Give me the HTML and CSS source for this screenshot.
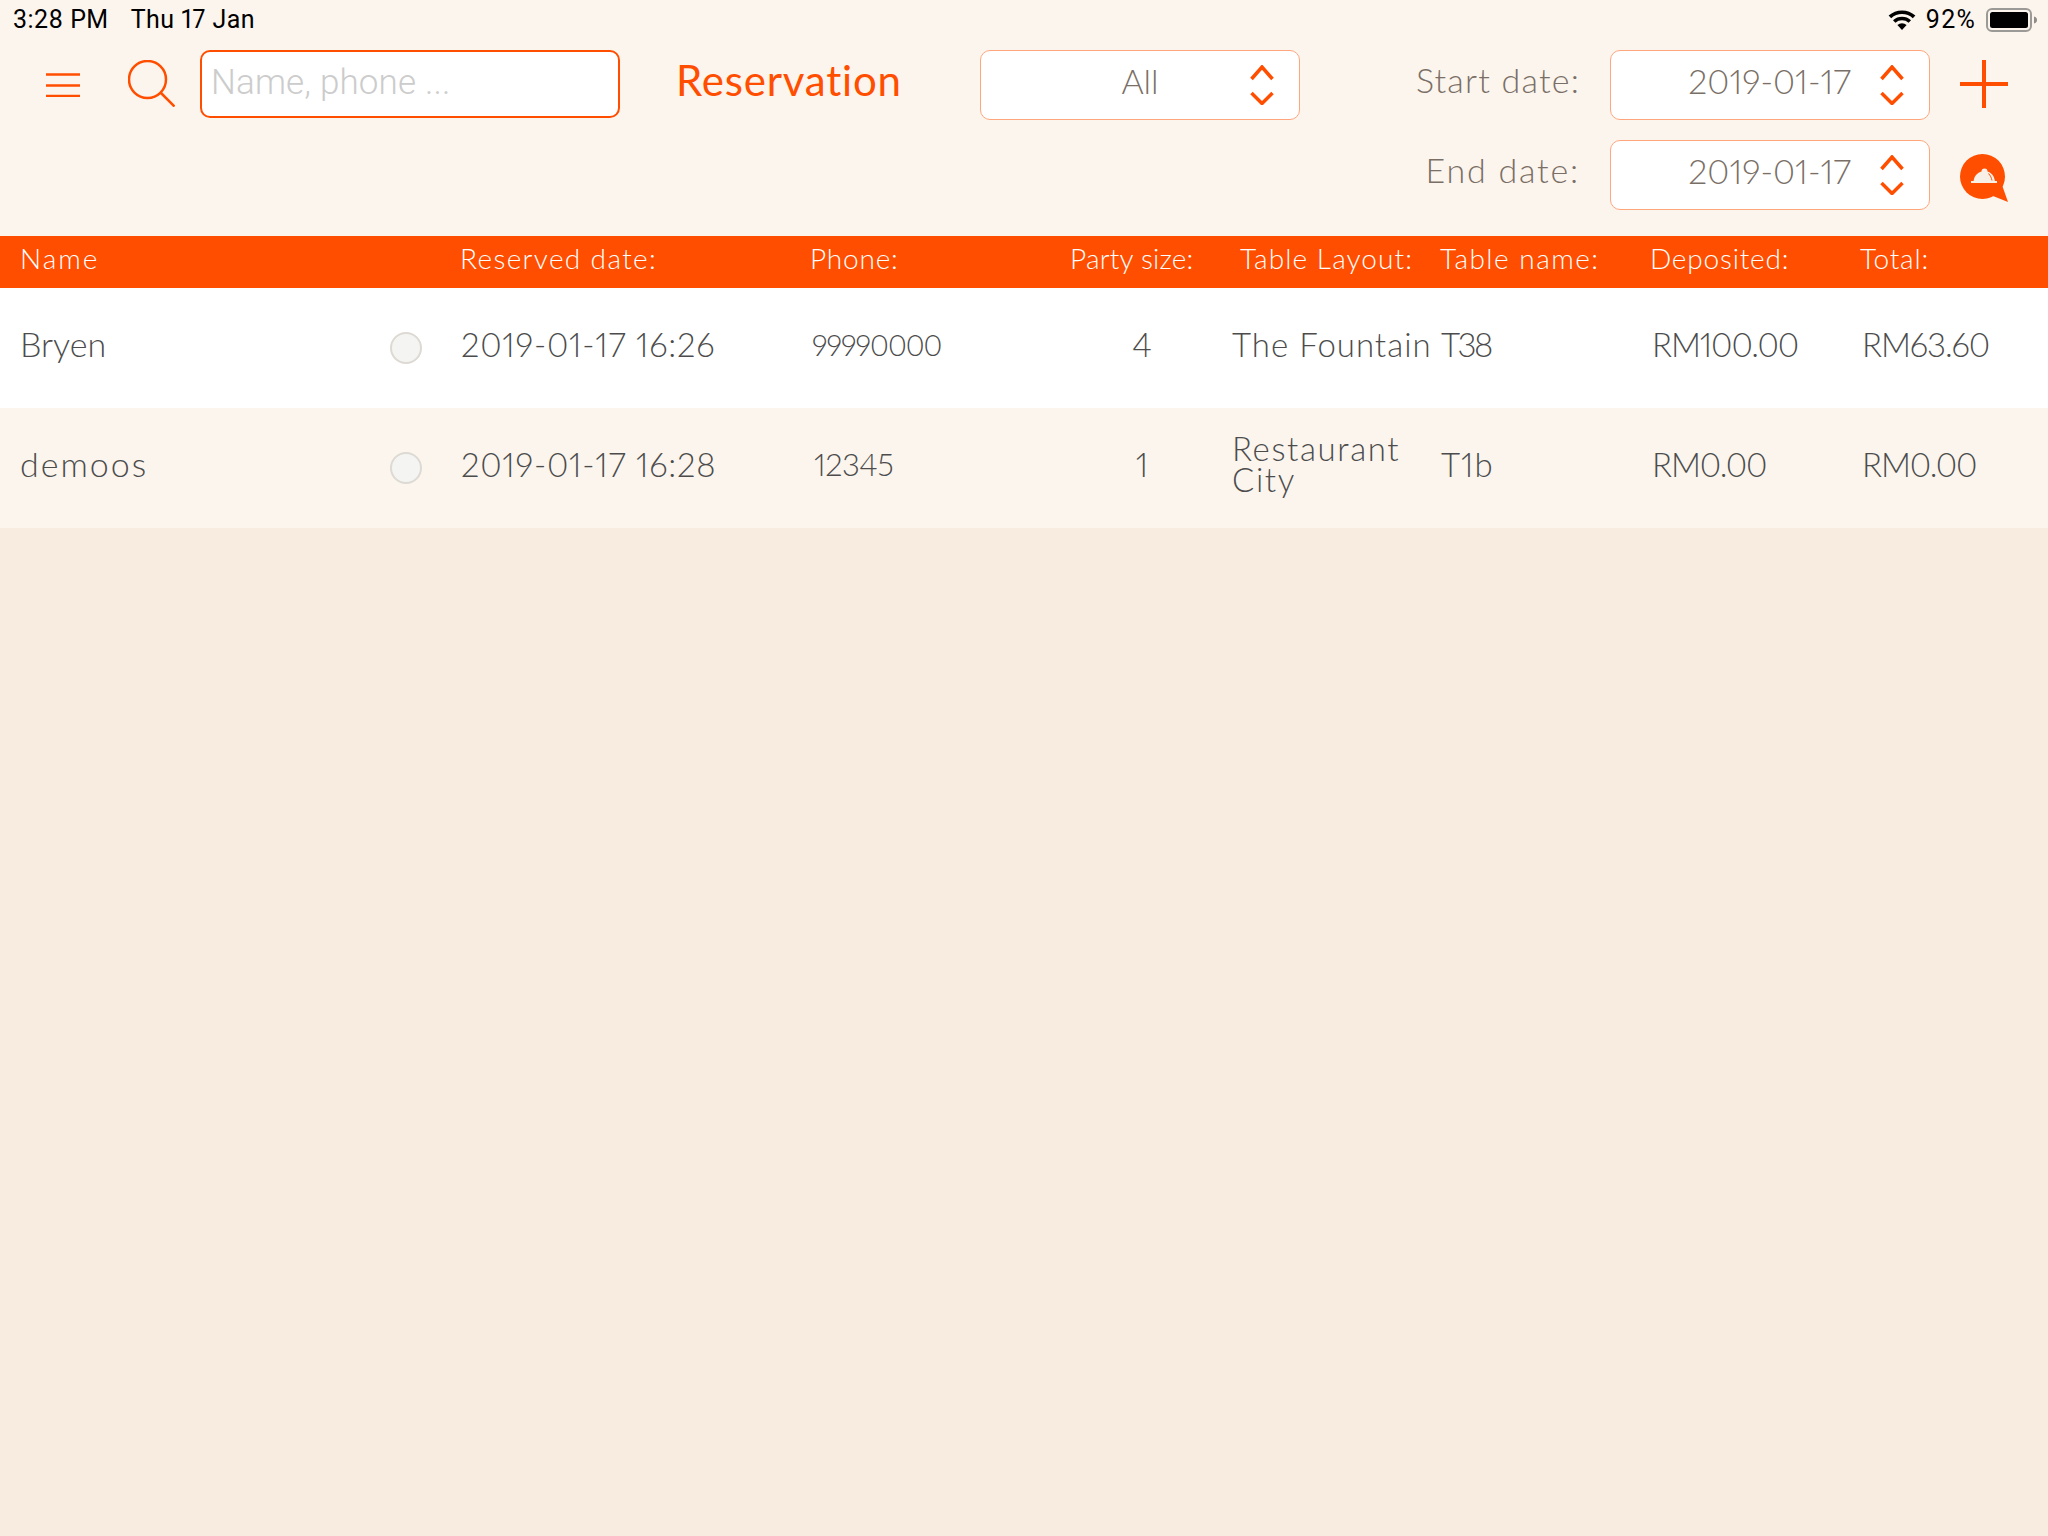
FILE: index.html
```html
<!DOCTYPE html>
<html lang="en">
<head>
<meta charset="utf-8">
<title>Reservation</title>
<link rel="stylesheet" href="styles.css">
</head>
<body>
<div class="top">
  <div class="status">
    <div class="status-left"><span>3:28 PM</span><span>Thu 17 Jan</span></div>
    <div class="status-right">
      <svg class="wifi" viewBox="0 0 28 20"><path d="M14 20l-4.600-5a7 7 0 0 1 9.200 0z"/><path d="M7.400 12.800l-2.400-2.600a13.500 13.500 0 0 1 18 0l-2.400 2.600a10 10 0 0 0-13.200 0z"/><path d="M3.200 8.300L.6 5.600a20 20 0 0 1 26.800 0l-2.600 2.700a16 16 0 0 0-21.600 0z"/></svg>
      <span class="pct">92%</span>
      <svg class="battery" viewBox="0 0 52 24"><rect x="1" y="1" width="44" height="22" rx="5" fill="none" stroke="#9c9a96" stroke-width="2"/><rect x="4" y="4" width="38" height="16" rx="2.500" fill="#000"/><path d="M48 8.500c2 .4 3 1.700 3 3.500s-1 3.100-3 3.500z" fill="#8f8d89"/></svg>
    </div>
  </div>
  <div class="toolbar">
    <div class="tool-left">
      <svg class="menu" viewBox="0 0 34 24"><path d="M0 1.500h34M0 12.500h34M0 23h34"/></svg>
      <svg class="search" viewBox="0 0 47 47"><circle cx="19.500" cy="19.500" r="18.500"/><path d="M33 33l13.500 13.500"/></svg>
      <div class="search-box">Name, phone ...</div>
      <div class="title">Reservation</div>
      <div class="box box-all"><span>All</span><svg class="updown" viewBox="0 0 24 40"><path d="M1.500 14L12 2l10.500 12M1.500 28L12 38.500 22.500 28"/></svg></div>
    </div>
    <div class="dates">
      <div class="date-row">
        <span class="date-label">Start date:</span>
        <div class="box box-date"><span>2019-01-17</span><svg class="updown" viewBox="0 0 24 40"><path d="M1.500 14L12 2l10.500 12M1.500 28L12 38.500 22.500 28"/></svg></div>
        <svg class="plus" viewBox="0 0 48 48"><path d="M24 0v48M0 24h48"/></svg>
      </div>
      <div class="date-row">
        <span class="date-label label-end">End date:</span>
        <div class="box box-date"><span>2019-01-17</span><svg class="updown" viewBox="0 0 24 40"><path d="M1.500 14L12 2l10.500 12M1.500 28L12 38.500 22.500 28"/></svg></div>
        <svg class="bubble" viewBox="0 0 48 48"><circle cx="22.500" cy="22.500" r="22.500" fill="#ff4e00"/><path d="M42 31l6 17-15-6z" fill="#ff4e00"/><path d="M11 27h2.600c.6-5 3.900-8.500 7.900-9.500a3 3 0 0 1 6 0c3.800 1 6.800 4.500 7.400 9.500H37v2H11z" fill="#f8f0e6"/><path d="M28.500 19.500c1.800 2 3 4.300 3.500 7" fill="none" stroke="#ff4e00" stroke-width="1"/></svg>
      </div>
    </div>
  </div>
</div>
<div class="table">
  <div class="row head">
    <span class="c-name">Name</span><span class="c-mark"></span><span class="c-date">Reserved date:</span><span class="c-phone">Phone:</span><span class="c-party">Party size:</span><span class="c-layout">Table Layout:</span><span class="c-table">Table name:</span><span class="c-dep">Deposited:</span><span class="c-total">Total:</span>
  </div>
  <div class="row body odd">
    <span class="c-name">Bryen</span><span class="c-mark"><i class="dot"></i></span><span class="c-date">2019-01-17 16:26</span><span class="c-phone">99990000</span><span class="c-party">4</span><span class="c-layout">The Fountain</span><span class="c-table table-tight">T38</span><span class="c-dep">RM100.00</span><span class="c-total">RM63.60</span>
  </div>
  <div class="row body even">
    <span class="c-name name-wide">demoos</span><span class="c-mark"><i class="dot"></i></span><span class="c-date">2019-01-17 16:28</span><span class="c-phone phone-short">12345</span><span class="c-party">1</span><span class="c-layout layout-wide">Restaurant City</span><span class="c-table table-loose">T1b</span><span class="c-dep">RM0.00</span><span class="c-total">RM0.00</span>
  </div>
</div>
</body>
</html>
```
FILE: styles.css
```css
* { box-sizing: border-box; }
html, body { margin: 0; height: 100%; }
body { background: #f8ebdf; font-family: "Lato", "Liberation Sans", sans-serif; font-weight: 300; font-variant-ligatures: none; font-variant-numeric: proportional-nums; min-height: 1536px; color: #4c4c4c; }
.top { background: #fcf5ee; height: 236px; display: flex; flex-direction: column; }
.status { height: 40px; padding: 6px 10px 0 13px; display: flex; justify-content: space-between; font-family: "Roboto", sans-serif; font-weight: 400; font-size: 25px; line-height: 28px; color: #000; }
.status-left { display: flex; gap: 22px; letter-spacing: .45px; }
.status-right { display: flex; gap: 10px; align-items: flex-start; }
.pct { letter-spacing: 1.200px; }
.wifi { width: 28px; height: 20px; margin-top: 4px; fill: #000; }
.battery { width: 52px; height: 24px; margin-top: 2px; }
.toolbar { display: flex; justify-content: space-between; padding: 10px 40px 0 46px; }
.tool-left { display: flex; align-items: flex-start; }
.menu { width: 34px; height: 24px; margin-top: 23px; fill: none; stroke: #ff4e00; stroke-width: 2.500; }
.search { width: 47px; height: 47px; margin: 10px 0 0 48px; fill: none; stroke: #ff4e00; stroke-width: 2.500; }
.search-box { width: 420px; height: 68px; margin-left: 25px; background: #fff; border: 2px solid #ff4e00; border-radius: 10px; padding-left: 9px; font-family: "Roboto", sans-serif; font-size: 35px; letter-spacing: .15px; line-height: 62px; color: #ccc; }
.title { width: 304px; margin-left: 56px; color: #ff4e00; font-size: 42px; letter-spacing: .8px; line-height: 60px; font-weight: 400; }
.box { background: #fff; border: 1px solid #ffa67f; border-radius: 10px; height: 70px; display: flex; align-items: center; color: #7a6f66; font-size: 34px; position: relative; }
.box > span { margin-bottom: 10px; }
.box-all { width: 320px; justify-content: center; }
.box-date { width: 320px; justify-content: flex-end; padding-right: 78px; }
.updown { width: 24px; height: 40px; fill: none; stroke: #ff4e00; stroke-width: 3.500; position: absolute; right: 25px; top: 14px; }
.dates { display: flex; flex-direction: column; gap: 20px; }
.date-row { display: flex; align-items: flex-start; justify-content: flex-end; }
.date-label { color: #7a6f66; font-size: 34px; letter-spacing: 1.200px; line-height: 60px; margin-right: 30px; }
.label-end { letter-spacing: 1.800px; }
.plus { width: 48px; height: 48px; margin: 10px 0 0 30px; fill: none; stroke: #ff4e00; stroke-width: 4; }
.bubble { width: 48px; height: 48px; margin: 14px 0 0 30px; }
.table { display: flex; flex-direction: column; }
.row { display: grid; grid-template-columns: 369px 92px 349px 260px 162px 209px 211px 211px 1fr; align-items: center; }
.row > span:first-child { padding-left: 20px; }
.head { height: 52px; padding-bottom: 8px; background: #ff4e00; color: #fff; font-size: 28px; letter-spacing: .8px; }
.head .c-name { letter-spacing: 2px; }
.head .c-date { margin-left: -1px; letter-spacing: 1.350px; }
.head .c-party { letter-spacing: .2px; }
.head .c-layout { padding-left: 8px; letter-spacing: 1.100px; }
.head .c-table { margin-left: -1px; letter-spacing: 1.500px; }
.head .c-dep { margin-left: -2px; }
.head .c-total { margin-left: -3px; }
.body { height: 120px; padding-bottom: 8px; font-size: 33px; color: #4c4c4c; }
.odd { background: #fff; }
.even { background: #fbf5ee; }
.c-mark { display: flex; justify-content: flex-start; margin-left: -72px; }
.dot { display: block; width: 32px; height: 32px; border-radius: 50%; background: #f4f4f3; border: 2px solid #ddd9d3; margin-top: 8px; margin-left: 93px; }
.body .c-name { font-size: 34px; margin-bottom: 2px; }
.body .name-wide { letter-spacing: 2px; }
.body .c-date { letter-spacing: .75px; }
.body .c-phone { padding-left: 2px; font-size: 29px; letter-spacing: -1px; }
.body .phone-short { padding-left: 4px; font-size: 31px; letter-spacing: -.5px; }
.body .c-party { text-align: center; padding-right: 18px; }
.body .c-layout { line-height: 31px; letter-spacing: 1px; }
.body .layout-wide { letter-spacing: 1.600px; }
.body .table-tight { letter-spacing: -2.500px; }
.body .table-loose { letter-spacing: 1px; }
.body .c-dep, .body .c-total { letter-spacing: -1.100px; }
.body .c-total { margin-left: -1px; }
```
